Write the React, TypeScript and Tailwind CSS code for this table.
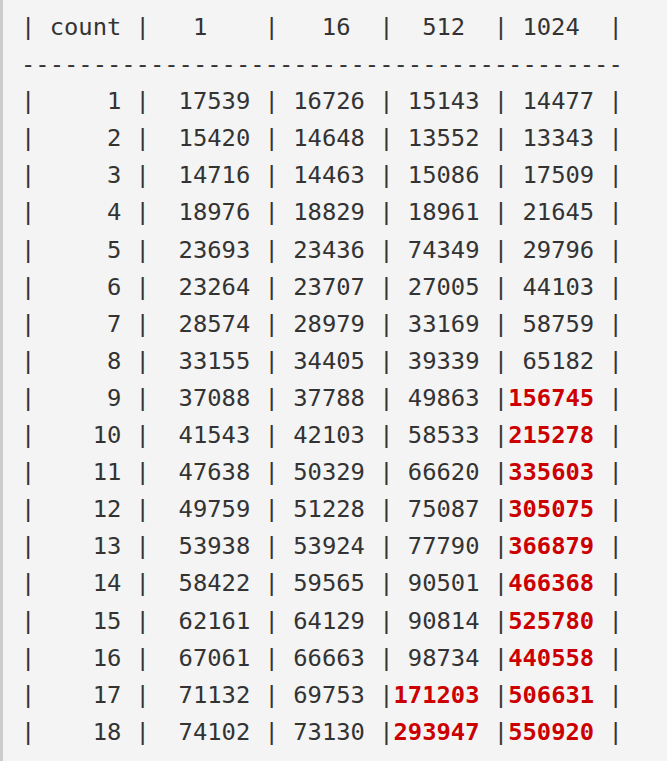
import React from 'react';

type Cell = { v: string; hot?: boolean };

// each row: count, then the four columns; hot = over the limit (red bold)
const rows: [number, Cell[]][] = [
    [1, [{ v: '17539' }, { v: '16726' }, { v: '15143' }, { v: '14477' }]],
    [2, [{ v: '15420' }, { v: '14648' }, { v: '13552' }, { v: '13343' }]],
    [3, [{ v: '14716' }, { v: '14463' }, { v: '15086' }, { v: '17509' }]],
    [4, [{ v: '18976' }, { v: '18829' }, { v: '18961' }, { v: '21645' }]],
    [5, [{ v: '23693' }, { v: '23436' }, { v: '74349' }, { v: '29796' }]],
    [6, [{ v: '23264' }, { v: '23707' }, { v: '27005' }, { v: '44103' }]],
    [7, [{ v: '28574' }, { v: '28979' }, { v: '33169' }, { v: '58759' }]],
    [8, [{ v: '33155' }, { v: '34405' }, { v: '39339' }, { v: '65182' }]],
    [9, [{ v: '37088' }, { v: '37788' }, { v: '49863' }, { v: '156745', hot: true }]],
    [10, [{ v: '41543' }, { v: '42103' }, { v: '58533' }, { v: '215278', hot: true }]],
    [11, [{ v: '47638' }, { v: '50329' }, { v: '66620' }, { v: '335603', hot: true }]],
    [12, [{ v: '49759' }, { v: '51228' }, { v: '75087' }, { v: '305075', hot: true }]],
    [13, [{ v: '53938' }, { v: '53924' }, { v: '77790' }, { v: '366879', hot: true }]],
    [14, [{ v: '58422' }, { v: '59565' }, { v: '90501' }, { v: '466368', hot: true }]],
    [15, [{ v: '62161' }, { v: '64129' }, { v: '90814' }, { v: '525780', hot: true }]],
    [16, [{ v: '67061' }, { v: '66663' }, { v: '98734' }, { v: '440558', hot: true }]],
    [17, [{ v: '71132' }, { v: '69753' }, { v: '171203', hot: true }, { v: '506631', hot: true }]],
    [18, [{ v: '74102' }, { v: '73130' }, { v: '293947', hot: true }, { v: '550920', hot: true }]],
];

const Value: React.FC<{ cell: Cell; lead: string }> = ({ cell, lead }) => {
    if (cell.hot) {
        return <span className="font-bold text-[#cc0000]">{cell.v}</span>;
    }
    return (
        <>
            {lead}
            {cell.v}
        </>
    );
};

export default function App() {
    return (
        <div className="min-h-screen bg-white">
            <pre className="h-[761px] overflow-hidden bg-[#f4f4f4] border-l-[3px] border-[#cccccc] pl-[18px] pt-[9px] text-[23.8px] leading-[37.1px] text-[#333333] font-['DejaVu_Sans_Mono','Liberation_Mono',monospace]">
                {'| count |   1    |   16  |  512  | 1024  |\n'}
                {'------------------------------------------\n'}
                {rows.map(([n, cells]) => (
                    <React.Fragment key={n}>
                        {'|' + String(n).padStart(6, ' ') + ' | '}
                        <Value cell={cells[0]} lead=" " />
                        {' |'}
                        <Value cell={cells[1]} lead=" " />
                        {' |'}
                        <Value cell={cells[2]} lead=" " />
                        {' |'}
                        <Value cell={cells[3]} lead=" " />
                        {' |\n'}
                    </React.Fragment>
                ))}
            </pre>
        </div>
    );
}
